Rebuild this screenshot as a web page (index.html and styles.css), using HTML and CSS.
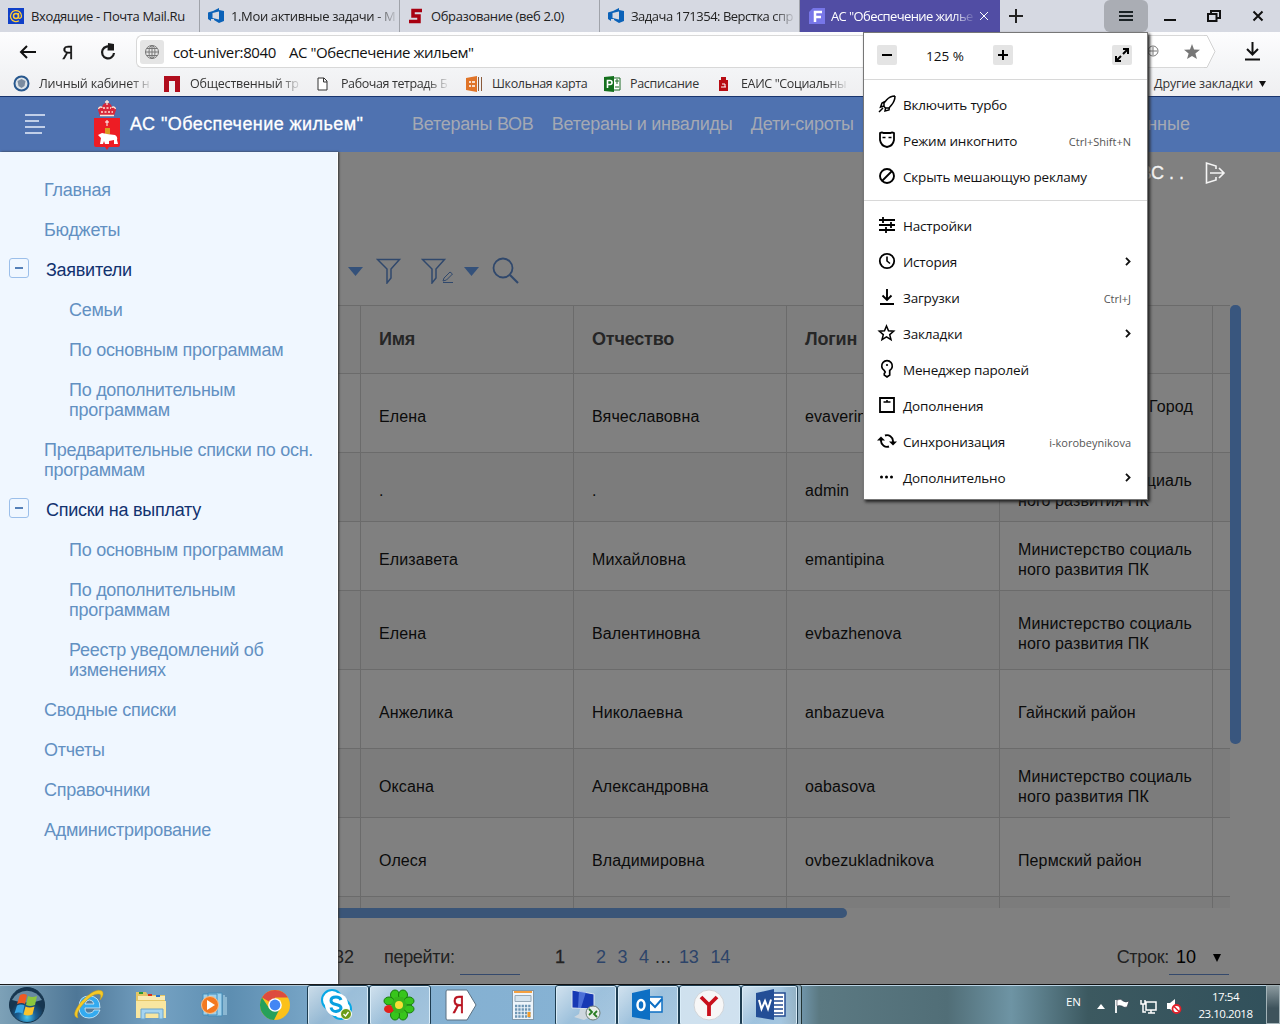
FILE: index.html
```html
<!DOCTYPE html>
<html lang="ru">
<head>
<meta charset="utf-8">
<title>АС "Обеспечение жильем"</title>
<link rel="stylesheet" href="styles.css">
</head>
<body>
<svg class="defs" width="0" height="0">
  <symbol id="vs" viewBox="0 0 16 16"><path fill="#0b62b8" fill-rule="evenodd" d="M0 4.500 5 3l6-3v2l5 1v10l-5 2-5-3v-1L3 11v2l-3-2zM4.500 5v5l6.500 1.500V3.500z"/></symbol>
  <symbol id="chev" viewBox="0 0 6 9"><path d="M1 .8 4.6 4.5 1 8.200" fill="none" stroke="#111" stroke-width="1.800"/></symbol>
  <symbol id="funnel" viewBox="0 0 26 26"><path d="M1.500 1.500h22L15 11v9l-4 5V11z" fill="none" stroke="#30486c" stroke-width="1.500"/></symbol>
</svg>
<div class="screen">
  <div class="tabs">
    <div class="tab"><svg width="16" height="16"><rect width="16" height="16" fill="#1040c8"/><circle cx="8" cy="8" r="2.500" fill="none" stroke="#fc3" stroke-width="1.500"/><path d="M10.500 5v4.500c.5 1.500 3 1 3-1.500a5.500 5.500 0 1 0-2.500 4.700" fill="none" stroke="#fc3" stroke-width="1.300"/></svg><span class="t1">Входящие - Почта Mail.Ru</span></div>
    <div class="tab"><svg width="16" height="16"><use href="#vs"/></svg><span class="t2 fade">1.Мои активные задачи - М</span></div>
    <div class="tab"><svg width="16" height="16"><path d="M14 2.500H5V8h6v5.500H1" fill="none" stroke="#a80010" stroke-width="3.500"/></svg><span class="t3">Образование (веб 2.0)</span></div>
    <div class="tab"><svg width="16" height="16"><use href="#vs"/></svg><span class="t4 fade">Задача 171354: Верстка спр</span></div>
    <div class="tab active"><svg width="16" height="16"><path d="M4 0h12v16H0V4z" fill="#7776e8"/><path d="M6 14V4h7M6 9h6" fill="none" stroke="#fff" stroke-width="2.500"/></svg><span class="t5 fade">АС "Обеспечение жилье</span><svg width="8" height="8"><path d="m0 0 8 8m0-8L0 8" stroke="#fff"/></svg></div>
    <svg class="plus" width="14" height="14"><path d="M7 0v14M0 7h14" stroke="#222" stroke-width="2"/></svg>
    <div class="burger"><svg width="14" height="12"><path d="M0 2h14M0 6h14M0 10h14" stroke="#1b2225" stroke-width="1.800"/></svg></div>
    <div class="winbtns">
      <svg width="12" height="14"><path d="M0 11h12" stroke="#111" stroke-width="2"/></svg>
      <svg width="14" height="14"><path d="M4 4V2h9v7h-3M1 5h8.500v7H1z" fill="none" stroke="#111" stroke-width="2"/></svg>
      <svg width="12" height="12"><path d="m1.500 1.500 9 9m0-9-9 9" stroke="#111" stroke-width="2"/></svg>
    </div>
  </div>
  <div class="addr">
    <svg width="18" height="14"><path d="M17 7H2m6-6L2 7l6 6" fill="none" stroke="#111" stroke-width="2"/></svg>
    <span class="ya">Я</span>
    <svg class="reload" width="16" height="18"><path d="M11.500 4.500A6 6 0 1 0 14 10" fill="none" stroke="#1b1b1b" stroke-width="2.200"/><path d="M8 0l6 1v6.500H7.500z" fill="#1b1b1b"/></svg>
    <div class="field">
      <div class="globe"><svg width="16" height="16" fill="none" stroke="#777"><circle cx="8" cy="8" r="6.500"/><ellipse cx="8" cy="8" rx="3" ry="6.500"/><path d="M1.500 8h13M3 4.500h10M3 11.500h10M8 1v14"/></svg></div>
      <span class="host">cot-univer:8040</span><span class="ttl">АС "Обеспечение жильем"</span>
      <span class="grow"></span>
      <svg width="14" height="14" fill="none" stroke="#777"><circle cx="7" cy="6" r="5"/><path d="M7 2v8M3 6h8"/></svg>
      <svg class="star" width="16" height="16" viewBox="0 0 18 18"><path fill="#777" d="m9 0 2.300 6.200L18 6.500l-5.200 4.200L14.600 17 9 13.400 3.400 17l1.800-6.300L0 6.500l6.700-.3z"/></svg>
    </div>
    <svg class="tip" width="12" height="33"><path d="M0 .5h3l8 16-8 16H0" fill="#fff" stroke="#d2d2d2"/></svg>
    <svg class="dl" width="15" height="19"><path d="M7.500 0v12M2 7l5.500 5.500L13 7M0 17.500h15" fill="none" stroke="#111" stroke-width="2"/></svg>
  </div>
  <div class="marks">
    <span class="bm b1"><svg width="17" height="17"><circle cx="8.500" cy="8.500" r="7" fill="#dde3e8" stroke="#28588e" stroke-width="2"/><path d="M4.500 6 8.500 4l4 2-1 5-3 2-3-2z" fill="#7b8ca0"/></svg><i class="fade">Личный кабинет н</i></span>
    <span class="bm b2"><svg width="16" height="16"><path d="M0 0h16v16h-5V5H5v11H0z" fill="#b00d1d"/></svg><i class="fade">Общественный тр</i></span>
    <span class="bm b3"><svg width="11" height="14"><path d="M1 1h6l3 3v9H1zM6.500 1v4H10" fill="#fff" stroke="#333"/></svg><i class="fade">Рабочая тетрадь Б</i></span>
    <span class="bm b4"><svg width="17" height="16"><path d="m0 2 11-2v16L0 14z" fill="#e07428"/><path d="M3 6h2m1 0h3M3 10h2m1 0h3" stroke="#fff" stroke-width="1.500"/><path d="M12.500 1v14m3-14v14" stroke="#8a5a3a"/></svg><i>Школьная карта</i></span>
    <span class="bm b5"><svg width="17" height="16"><path d="M8 2h8v12H8z" fill="#fff" stroke="#1c6b25"/><path d="m0 1 10-1v16L0 15z" fill="#14701e"/><path d="M3.500 12V4.500H6a2 2 0 0 1 0 4H3.500" fill="none" stroke="#fff" stroke-width="1.600"/><path d="M11 5h4m-2-2v5m-2 3h4" stroke="#1c6b25"/></svg><i>Расписание</i></span>
    <span class="bm b6"><svg width="9" height="14"><path d="M2 0h5v3H2zM0 3h9v11H0z" fill="#b80d14"/><path d="M2 10h5M3 7h3v3" stroke="#fff" fill="none"/></svg><i class="fade">ЕАИС "Социальны</i></span>
    <span class="bm b7"><i>Другие закладки</i><svg width="7" height="6"><path d="M0 0h7L3.500 6z" fill="#111"/></svg></span>
  </div>

  <header class="head">
    <svg class="hm" width="22" height="20"><path d="M1 1h20M1 7h14M1 13h20M1 19h17" stroke="#e7eefa" stroke-width="1.600"/></svg>
    <svg class="arms" width="28" height="50" viewBox="0 0 28 50"><path d="M1 18h26v27q0 2-2 2H16l-2 3-2-3H3q-2 0-2-2z" fill="#ed1c24"/><path d="m7 16-2-6q0-4 4-3 1-4 5-4t5 4q4-1 4 3l-2 6z" fill="#d8273a"/><path d="M7 15.500h14M5.500 9q1-3 4-1.500M22.500 9q-1-3-4-1.500M14 0v5m-2-3h4" fill="none" stroke="#ffe8d8" stroke-width="1.300"/><path d="M8 12h12M10 8h8" stroke="#ffe8d8" stroke-width="1.500" stroke-dasharray="2 1.500"/><path d="M14 20v6m-2-4h4" stroke="#fff"/><path d="M12 28h5v6h-5z" fill="#d99b22"/><path d="m5 35 4-2 5 1 8 1q3 2 2 5l1 4h-4v-4l-5 1v3h-4l-1-3-1 3H7l1-6z" fill="#fff"/></svg>
    <span class="app">АС "Обеспечение жильем"</span>
    <nav><span>Ветераны ВОВ</span><span>Ветераны и инвалиды</span><span>Дети-сироты</span></nav>
    <span class="lastnav">нные</span>
  </header>

  <div class="body">
    <aside>
      <a>Главная</a>
      <a>Бюджеты</a>
      <a class="open"><b></b>Заявители</a>
      <a class="sub">Семьи</a>
      <a class="sub">По основным программам</a>
      <a class="sub">По дополнительным<br>программам</a>
      <a>Предварительные списки по осн.<br>программам</a>
      <a class="open"><b></b>Списки на выплату</a>
      <a class="sub">По основным программам</a>
      <a class="sub">По дополнительным<br>программам</a>
      <a class="sub">Реестр уведомлений об<br>изменениях</a>
      <a>Сводные списки</a>
      <a>Отчеты</a>
      <a>Справочники</a>
      <a>Администрирование</a>
    </aside>
    <main>
      <div class="user"><span>ВС . .</span><svg width="20" height="22"><path d="M11 7V4L1.500 1v20l9.500-3v-3M5 11h14m-5-5 5 5-5 5" fill="none" stroke="#f4f4f4" stroke-width="1.600"/></svg></div>
      <div class="tools">
        <svg class="c1" width="16" height="9"><path d="M0 0h15L7.500 9z" fill="#34517a"/></svg>
        <svg class="c2" width="26" height="26"><use href="#funnel"/></svg>
        <svg class="c3" width="34" height="26"><use href="#funnel" width="26" height="26"/><path d="m23 20 6-6 2.500 2-6 6-3.500 1zm-1 4.500h10" fill="none" stroke="#30486c"/></svg>
        <svg class="c4" width="16" height="9"><path d="M0 0h15L7.500 9z" fill="#34517a"/></svg>
        <svg class="c5" width="28" height="28"><circle cx="11" cy="11" r="9.500" fill="none" stroke="#30486c" stroke-width="1.800"/><path d="m18 18 8 8" stroke="#30486c" stroke-width="2.200"/></svg>
      </div>
      <div class="tablewrap">
        <div class="table">
          <div class="row th"><p></p><p>Имя</p><p>Отчество</p><p>Логин</p><p></p></div>
          <div class="row tall"><p></p><p>Елена</p><p>Вячеславовна</p><p>evaverina</p><p class="city">Город<br>&nbsp;</p></div>
          <div class="row alt"><p></p><p>.</p><p>.</p><p>admin</p><p>Министерство социаль<br>ного развития ПК</p></div>
          <div class="row"><p></p><p>Елизавета</p><p>Михайловна</p><p>emantipina</p><p>Министерство социаль<br>ного развития ПК</p></div>
          <div class="row tall alt"><p></p><p>Елена</p><p>Валентиновна</p><p>evbazhenova</p><p>Министерство социаль<br>ного развития ПК</p></div>
          <div class="row tall"><p></p><p>Анжелика</p><p>Николаевна</p><p>anbazueva</p><p>Гайнский район</p></div>
          <div class="row alt"><p></p><p>Оксана</p><p>Александровна</p><p>oabasova</p><p>Министерство социаль<br>ного развития ПК</p></div>
          <div class="row tall"><p></p><p>Олеся</p><p>Владимировна</p><p>ovbezukladnikova</p><p>Пермский район</p></div>
          <div class="row alt"><p></p><p></p><p></p><p></p><p></p></div>
        </div>
        <div class="vbar"></div>
      </div>
      <div class="hbar"></div>
      <div class="pager">
        <span class="total"><span>132</span></span><span class="go">перейти:</span><span class="inp"></span>
        <span class="cur">1</span><span class="p2">2</span><span class="p3">3</span><span class="p4">4</span><span class="dots">...</span><span class="p13">13</span><span class="p14">14</span>
        <span class="grow"></span><span class="rows">Строк:</span><span class="sel">10<svg width="8" height="8"><path d="M0 0h8L4 8z" fill="#000"/></svg></span>
      </div>
    </main>
  </div>

  <div class="taskbar">
    <div class="start"><svg width="38" height="38" viewBox="0 0 38 38"><defs><radialGradient id="orb" cx=".5" cy=".85"><stop offset="0" stop-color="#48c8f0"/><stop offset=".5" stop-color="#1c5f94"/><stop offset="1" stop-color="#173650"/></radialGradient></defs><circle cx="19" cy="19" r="17.500" fill="url(#orb)" stroke="#16344c"/><path d="M4 14a16 14 0 0 1 30 0q-15 5-30 0" fill="#9cc3d8" opacity=".6"/><path d="M12 9q4-2 7 0l-2 9q-3-2-8 0z" fill="#ee5a24"/><path d="M20 10q4 2 9 0l-2 9q-5 2-9 0z" fill="#8cc63e"/><path d="M9 19.500q4-2 7.500 0l-2 8q-4-2-8 0z" fill="#38a4e4"/><path d="M17.500 20.500q4 2 9 0l-2 8q-5 2-9 0z" fill="#fcc42c"/></svg></div>
    <div class="task"><svg width="32" height="32"><path d="M27 21q-3 8-11 8-10 0-10-11T16 7q11 0 11 12H12q0 6 5 5 3 0 4-3zM12 15h9q-1-4-4.500-4T12 15" fill="#33aaf0" stroke="#d8f0fb" stroke-width=".8"/><path d="M5 29Q-3 27 8 13 22-2 29 2q3 3-2 9 2-6-1-6-6-1-15 9T5 29" fill="#f5ca28" stroke="#cf9e13" stroke-width=".5"/></svg></div>
    <div class="task"><svg width="32" height="30"><path d="M1 5V2h10l2 3h17v22H1z" fill="#e4c565"/><path d="M3 7h27M3 9h27" stroke="#fff8d0" stroke-width="1.500"/><path d="M1 11h30v17H1z" fill="#f8e6a0"/><path d="M4 3h4" stroke="#2a9a30" stroke-width="2"/><path d="M13 5h4" stroke="#d63020" stroke-width="2"/><path d="M21 6h4" stroke="#2a75cc" stroke-width="2"/><path d="M6 29V19h22v10h-4v-6H10v6z" fill="#a5d4f0" stroke="#6ba5cd"/></svg></div>
    <div class="task"><svg width="28" height="26"><path d="M9 1h14v23H9zM4 2h14v21H4z" fill="#9ed1ec" stroke="#468db8"/><path d="M25 3v20M27 5v18" stroke="#b7dff1"/><circle cx="11" cy="13" r="8.500" fill="#f47920" stroke="#fac08c"/><path d="m8 8 8 5-8 5z" fill="#fff"/></svg></div>
    <div class="task"><svg width="30" height="30"><circle cx="15" cy="15" r="15" fill="#fbc11a"/><path d="M15 15 2 7.500A15 15 0 0 1 28 7.500H15z" fill="#dd4b3e"/><path d="M2 7.500A15 15 0 0 0 14 30l6-12-5 3-6-3z" fill="#26a05a"/><circle cx="15" cy="15" r="6.800" fill="#fff"/><circle cx="15" cy="15" r="5.400" fill="#4486f4"/></svg></div>
    <div class="task on"><svg width="32" height="32"><circle cx="11" cy="11" r="10" fill="#fff" stroke="#08a8e6" stroke-width="2"/><circle cx="20" cy="20" r="10" fill="#fff" stroke="#08a8e6" stroke-width="2"/><circle cx="15.500" cy="15.500" r="11.500" fill="#fff"/><path d="M20 11q-1-3-5-3-5 0-5 3.500 0 3 5 4t5 3.500-5 3.500q-4 0-5-4" fill="none" stroke="#08a0e0" stroke-width="3"/><circle cx="25" cy="25" r="5.500" fill="#6c9c18" stroke="#fff"/><path d="m22.500 25 2 2 3-4" fill="none" stroke="#fff" stroke-width="1.300"/></svg></div>
    <div class="task on"><svg width="32" height="32"><g fill="#37c51c" stroke="#187c0c"><ellipse cx="12" cy="6" rx="4.500" ry="5"/><ellipse cx="20" cy="6" rx="4.500" ry="5"/><ellipse cx="26" cy="12" rx="5" ry="4"/><ellipse cx="26" cy="20" rx="5" ry="4"/><ellipse cx="20" cy="26" rx="4.500" ry="5"/><ellipse cx="12" cy="26" rx="4.500" ry="5"/><ellipse cx="6" cy="12" rx="5" ry="4"/></g><ellipse cx="6" cy="20" rx="5" ry="4" fill="#e2211c"/><path d="M12 8h8l4 8-4 8h-8l-4-8z" fill="#37b51c"/><circle cx="16" cy="16" r="4" fill="#f8df36"/></svg></div>
    <div class="task"><svg width="32" height="32"><path d="M2 1h20l9 15-9 15H2q-1 0-1-2V3q0-2 1-2" fill="#fff" stroke="#5b7182"/></svg><span class="yared">Я</span></div>
    <div class="task"><svg width="22" height="30"><rect x=".5" y=".5" width="21" height="29" fill="#eef5fb" stroke="#8199ab"/><path d="M2 2h18" stroke="#f4a040" stroke-width="2"/><path d="M3 5.500h16v6H3z" fill="#d4e3ee" stroke="#96a9b8"/><path d="M3 16h16M3 19.500h16M3 23h16M3 26.500h16" stroke="#6e96b5" stroke-width="2.300" stroke-dasharray="2.300 1"/><path d="M17 22v5" stroke="#f39b28" stroke-width="3"/></svg></div>
    <div class="task on"><svg width="32" height="32"><path d="m3 1 22 4v15L3 19z" fill="#1739b4" stroke="#dde7ef"/><path d="m10 2 7 1-5 16H9z" fill="#6f95ef" opacity=".6"/><path d="m11 20-1 5-5 3 10 3 6-3-4-3v-5" fill="#ced7de"/><circle cx="24" cy="24" r="7" fill="#e7ece7" stroke="#6f7c78"/><path d="m20 20 3 3-3 3m8-4-3 3 3 3" fill="none" stroke="#297c22" stroke-width="1.800"/></svg></div>
    <div class="task on"><svg width="32" height="32"><path d="M17 8h14v15H17z" fill="#fff" stroke="#0d6fc4" stroke-width="1.500"/><path d="m18 12 6 6 7-8" fill="none" stroke="#0d6fc4" stroke-width="2"/><path d="m1 4 18-4v31L1 28z" fill="#0d6fc4"/><ellipse cx="10" cy="16" rx="3.500" ry="5" fill="none" stroke="#fff" stroke-width="2.500"/></svg></div>
    <div class="task on hot"><svg width="32" height="32"><circle cx="16" cy="16" r="15" fill="#f7f7f7" stroke="#d0d4d8"/><path d="m8 8 8 8v11m0-11 8-8" fill="none" stroke="#c8101c" stroke-width="3.800"/></svg></div>
    <div class="task on stack"><svg width="32" height="32"><path d="M17 4h13v23H17z" fill="#fff" stroke="#244c92" stroke-width="1.500"/><path d="M19 8h9M19 12h9M19 16h9M19 20h9M19 24h9" stroke="#244c92" stroke-width="1.500"/><path d="m1 4 18-4v31L1 28z" fill="#234e96"/><path d="m4 11 2.500 9L10 12l3 8 3-9.500" fill="none" stroke="#fff" stroke-width="2"/></svg></div>
    <span class="grow"></span>
    <span class="en">EN</span>
    <div class="tray">
      <svg width="8" height="5"><path d="m4 0 4 5H0z" fill="#fff"/></svg>
      <svg width="16" height="16"><path d="M2 2v13" stroke="#fff" stroke-width="1.800"/><path d="M3 2q4-2 6 1 3 2 6 0l-2 6q-3 1-5-1-3-1-5 0z" fill="#fff" stroke="#223" stroke-width=".5"/></svg>
      <svg width="17" height="16"><path d="M6 4h10v8H6zM8 15h7m-4-3v3M1 2v4h4V2M3 6v8h3" fill="none" stroke="#fff" stroke-width="1.500"/></svg>
      <svg width="16" height="16"><path d="M1 5h3l5-4v14l-5-4H1z" fill="#fff"/><circle cx="10.500" cy="11" r="4" fill="#fff" stroke="#e2202a" stroke-width="1.800"/><path d="m8 8.500 5 5" stroke="#e2202a" stroke-width="1.500"/></svg>
    </div>
    <div class="clock">17:54<br>23.10.2018</div>
    <div class="peek"></div>
  </div>

  <div class="menu">
    <div class="zoomrow"><span class="zb"><svg width="12" height="12"><path d="M1 6h10" stroke="#000" stroke-width="2"/></svg></span><span class="pct">125 %</span><span class="zb"><svg width="12" height="12"><path d="M1 6h10M6 1v10" stroke="#000" stroke-width="2"/></svg></span><span class="grow"></span><span class="zb"><svg width="16" height="16"><path d="M9 2h5v5M14 2 9 7M2 9v5h5M2 14l5-5" fill="none" stroke="#000" stroke-width="2"/></svg></span></div>
    <div class="group">
      <div class="mi"><svg width="18" height="18"><path d="M17 1q-5 0-8.500 4L6 8v3.500l1.500 1.500H11l2.500-3Q17 6 17 1M7 6.500 4 8l-1.500 4L6 11m5.500 1L11 15l-4 1 .5-3M5 13l-4 4" fill="none" stroke="#000" stroke-width="1.500"/></svg><span>Включить турбо</span></div>
      <div class="mi"><svg width="18" height="18"><path d="M2 2q2-1 3.500 0h7Q14 1 16 2v7q-1 6-7 7-6-1-7-7z" fill="none" stroke="#000" stroke-width="1.800"/><path d="M4.500 6.500h3m3 0h3" stroke="#000" stroke-width="1.300"/></svg><span>Режим инкогнито</span><em>Ctrl+Shift+N</em></div>
      <div class="mi"><svg width="18" height="18"><path d="m4 14 10-10" stroke="#000" stroke-width="1.800"/><circle cx="9" cy="9" r="7" fill="none" stroke="#000" stroke-width="1.900"/></svg><span>Скрыть мешающую рекламу</span></div>
    </div>
    <div class="group second">
      <div class="mi"><svg width="18" height="18"><path d="M1 4h16M1 9h16M1 14h16M5 1v6m8-1v6M8 11v6" stroke="#000" stroke-width="1.800"/></svg><span>Настройки</span></div>
      <div class="mi"><svg width="18" height="18"><path d="M9 4.500V9l3 2.500" fill="none" stroke="#000" stroke-width="1.600"/><circle cx="9" cy="9" r="7.200" fill="none" stroke="#000" stroke-width="1.800"/></svg><span>История</span><svg class="chev"><use href="#chev"/></svg></div>
      <div class="mi"><svg width="18" height="18"><path d="M9 1v11M4.500 7.500 9 12l4.500-4.500M2 16h14" fill="none" stroke="#000" stroke-width="1.900"/></svg><span>Загрузки</span><em>Ctrl+J</em></div>
      <div class="mi"><svg width="18" height="18"><path d="m8.500 2 2 4.800 5.200.4-4 3.400 1.300 5.100-4.500-2.800L4 15.700l1.300-5.100-4-3.400 5.200-.4z" fill="none" stroke="#000" stroke-width="1.500"/></svg><span>Закладки</span><svg class="chev"><use href="#chev"/></svg></div>
      <div class="mi"><svg width="18" height="18"><path d="M6.300 10.500A5.300 5.300 0 1 1 11.700 10.500V15L9 17l-2.700-2v-1.500l.9-1.500z" fill="none" stroke="#000" stroke-width="1.700"/><circle cx="9" cy="5" r="1.100"/></svg><span>Менеджер паролей</span></div>
      <div class="mi"><svg width="18" height="18"><path d="M2 2h14v14H2z" fill="none" stroke="#000" stroke-width="1.800"/><path d="M5.500 6h7M9 4v2" stroke="#000" stroke-width="1.600"/></svg><span>Дополнения</span></div>
      <div class="mi"><svg width="18" height="18"><path d="M3 7v2a6 6 0 0 0 8 5.500M15 11V9A6 6 0 0 0 7 3.500" fill="none" stroke="#000" stroke-width="1.900"/><path d="m-1 8.500 4-4 4 4zm12 1 4 4 4-4z"/></svg><span>Синхронизация</span><em>i-korobeynikova</em></div>
      <div class="mi"><svg width="18" height="18"><circle cx="3.500" cy="9" r="1.500"/><circle cx="8.500" cy="9" r="1.500"/><circle cx="13.500" cy="9" r="1.500"/></svg><span>Дополнительно</span><svg class="chev"><use href="#chev"/></svg></div>
    </div>
  </div>
</div>
</body>
</html>
```
FILE: styles.css
```css
* { box-sizing: border-box; }
body { margin: 0; font-family: "Liberation Sans", Arial, sans-serif; }
svg { display: block; flex: none; overflow: visible; }
p { margin: 0; }
.defs { position: absolute; }
.grow { flex: 1; }
.screen { position: relative; width: 1280px; height: 1024px; overflow: hidden; display: flex; flex-direction: column; }
.tabs, .addr, .marks, .menu, .taskbar { font-family: "Open Sans", "Noto Sans", sans-serif; white-space: nowrap; }
.fade { -webkit-mask-image: linear-gradient(to right, #000 calc(100% - 20px), #0002); mask-image: linear-gradient(to right, #000 calc(100% - 20px), #0002); }

.tabs { height: 32px; flex: none; display: flex; background: #d6d9e2; align-items: center; }
.tab { width: 200px; height: 32px; padding-left: 8px; display: flex; align-items: center; gap: 7px; border-right: 1px solid #a0a3aa; font-size: 13px; letter-spacing: -.37px; color: #222; }
.tab span { flex: none; }
.tab.active { background: #514da4; color: #fff; border: 0; padding-left: 9px; gap: 6px; }
.tab.active > svg:last-child { margin-left: auto; margin-right: 12px; }
.t5 { letter-spacing: -.6px; }
.t4 { letter-spacing: -.5px; }
.plus { margin-left: 9px; }
.burger { margin-left: 81px; width: 44px; height: 32px; border-radius: 6px; background: #aaadb4; display: grid; place-items: center; }
.winbtns { flex: 1; display: flex; justify-content: space-between; align-items: center; padding: 0 16px 0 16px; }

.addr { height: 39px; flex: none; display: flex; align-items: center; background: linear-gradient(#fdfdfe, #f3f4f6); padding-left: 19px; }
.ya { width: 12px; margin-left: 25px; font-size: 19px; color: #111; -webkit-text-stroke: .4px #111; transform: scaleX(.95); }
.reload { margin-left: 26px; }
.field { margin-left: 20px; width: 1068px; height: 33px; background: #fff; border: 1px solid #d8d8d8; border-right: 0; border-radius: 6px 0 0 6px; display: flex; align-items: center; padding-left: 3px; font-size: 15px; color: #111; }
.globe { width: 24px; height: 24px; border-radius: 3px; background: #e5e5e5; display: grid; place-items: center; margin-right: 9px; }
.host { width: 116px; letter-spacing: -.4px; }
.ttl { letter-spacing: -.45px; }
.star { margin: 0 4px 0 24px; }
.dl { margin-left: 29px; }

.marks { height: 25px; flex: none; display: flex; align-items: center; background: linear-gradient(#f3f4f6, #efeff1); padding-left: 13px; font-size: 12.5px; letter-spacing: -.3px; color: #333; }
.bm { display: flex; align-items: center; flex: none; gap: 10px; }
.bm i { font-style: normal; flex: none; }
.b1 { width: 151px; gap: 9px; }
.b1 i, .b2 i, .b3 i { letter-spacing: -.2px; }
.b2 { width: 153px; }
.b3 { width: 149px; gap: 13px; }
.b3 i { letter-spacing: -.4px; }
.b4 { width: 138px; gap: 9px; }
.b4 i { letter-spacing: -.35px; }
.b5 { width: 115px; gap: 9px; }
.b6 { width: 434px; gap: 13px; }
.b6 i { letter-spacing: -.35px; }
.b7 { gap: 6px; margin-left: 1px; letter-spacing: -.15px; }

.head { height: 56px; flex: none; background: #4f72b0; border-top: 1px solid #18346e; display: flex; align-items: center; padding-left: 24px; color: #fff; }
.hm { margin-top: -2px; }
.arms { margin-left: 47px; }
.app { margin-left: 9px; width: 282px; font-size: 18px; letter-spacing: .43px; -webkit-text-stroke: .3px #fff; white-space: nowrap; }
.head nav { display: flex; gap: 18.300px; font-size: 18px; letter-spacing: -.27px; color: #a5a9b3; white-space: nowrap; }
.lastnav { margin-left: auto; margin-right: 90px; font-size: 18px; color: #a5a9b3; }

.body { height: 832px; flex: none; display: flex; }
aside { width: 338px; background: #f0f7ff; border-right: 1px solid #fff; padding-top: 18px; display: flex; flex-direction: column; z-index: 1; box-shadow: 1px 0 2px #333; }
aside a { padding: 10px 0 10px 44px; font-size: 18px; line-height: 20px; letter-spacing: -.27px; color: #6290c2; white-space: nowrap; }
aside .sub { padding-left: 69px; }
aside .open { padding-left: 9px; color: #12326f; display: flex; gap: 17px; }
aside b { width: 20px; height: 20px; margin-top: -2px; border: 1px solid #9cbfea; border-radius: 3px; display: grid; place-items: center; }
aside b::before { content: ""; width: 8px; height: 2px; background: #5580b8; }

main { width: 942px; background: #808080; display: flex; flex-direction: column; }
.user { height: 42px; display: flex; justify-content: flex-end; align-items: center; gap: 21px; padding-right: 55px; color: #f4f4f4; font-size: 18px; -webkit-text-stroke: .3px #f4f4f4; }
.tools { height: 111px; display: flex; align-items: flex-start; padding: 62px 0 0 10px; }
.c1 { margin-top: 11px; }
.c2 { margin: 2px 0 0 12px; }
.c3 { margin: 2px 0 0 19px; }
.c4 { margin: 11px 0 0 9px; }
.c5 { margin: 1px 0 0 12px; }
.tablewrap { height: 603px; display: flex; }
.table { width: 892px; overflow: hidden; border-top: 1px solid #6b6b6b; }
.row { height: 69px; display: grid; grid-template-columns: 23px 213px 213px 213px 213px; border-bottom: 1px solid #6b6b6b; font-size: 16px; line-height: 20px; letter-spacing: .11px; color: #0b0b0b; }
.row p { border-right: 1px solid #6b6b6b; padding: 7px 0 0 18px; display: flex; align-items: center; white-space: nowrap; }
.row.alt { background: #7c7c7c; }
.row.tall { height: 79px; }
.row.th { height: 68px; font-weight: bold; font-size: 18px; letter-spacing: -.2px; color: #262626; background: #7e7e7e; }
.row.th p { padding-top: 0; padding-bottom: 2px; }
.row .city { padding-left: 149px; }
.vbar { width: 11px; height: 439px; border-radius: 5px; background: #39567e; }
.hbar { height: 10px; width: 509px; border-radius: 0 5px 5px 0; background: #3a5578; }
.pager { height: 66px; display: flex; align-items: center; padding: 12px 51px 0 0; font-size: 18px; color: #222; }
.total { width: 16px; display: flex; justify-content: flex-end; }
.go { margin-left: 30px; width: 76px; letter-spacing: -.3px; }
.inp { width: 60px; height: 35px; border-bottom: 1px solid #34496c; }
.cur { margin-left: 35px; width: 41px; -webkit-text-stroke: .3px #222; }
.p2, .p3, .p4, .p13, .p14 { color: #2d4469; letter-spacing: -.2px; }
.p2, .p3 { width: 21.500px; } .p4 { width: 16px; } .dots { width: 24px; letter-spacing: .5px; } .p13 { width: 31.500px; }
.rows { letter-spacing: -.3px; }
.sel { width: 60px; height: 35px; padding-left: 7px; padding-top: 2px; border-bottom: 1px solid #34496c; display: flex; align-items: center; gap: 17px; color: #000; }

.taskbar { height: 40px; flex: none; display: flex; align-items: center; border-top: 1px solid #111; box-shadow: inset 0 1px #b8d2e3; background: linear-gradient(to right, #7da1b7 0, #4e7797 6%, #75a2c3 12%, #5d8eb1 18%, #83afd0 27%, #89b5d7 61%, #5b7982 64%, #516e77 74%, #6e94a4 79%, #3c5960 85%, #31505b 100%); color: #fff; }
.start { width: 58px; padding-left: 8px; }
.task { width: 62px; height: 39px; display: grid; place-items: center; position: relative; }
.task.on::before { content: ""; position: absolute; left: 1px; top: 0; width: 60px; height: 39px; border: 1px solid #1d3c50; border-radius: 3px; box-shadow: inset 0 0 0 1px #d9ecf8; background: linear-gradient(135deg, #ffffffa0, #ffffff30 50%, #ffffff44); }
.task.hot::before { background: #ffffff99; }
.task.stack::before { width: 55px; box-shadow: inset 0 0 0 1px #d9ecf8, 3px 0 0 #8eabbc, 4px 0 0 #233; }
.task svg { position: relative; }
.yared { position: absolute; left: 21px; top: 0; font-size: 24px; line-height: 38px; color: #b7101d; -webkit-text-stroke: .6px #b7101d; transform: scaleX(.8); }
.en { font-size: 11.500px; margin-right: 16px; margin-bottom: 6px; }
.tray { display: flex; align-items: center; width: 85px; margin-top: 3px; justify-content: space-between; }
.clock { width: 84px; padding-left: 3px; font-size: 11.500px; line-height: 17px; text-align: center; letter-spacing: -.45px; }
.peek { width: 14px; height: 39px; border: 1px solid #a3b3b8; background: linear-gradient(#8b9a9f, #3e535c 60%); }

.menu { position: absolute; left: 863px; top: 32px; width: 285px; height: 468px; background: #fff; border: 1px solid #777; box-shadow: 2px 2px 3px #222; font-size: 13.500px; letter-spacing: -.2px; color: #111; }
.zoomrow { height: 47px; border-bottom: 1px solid #d8d8d8; padding: 0 15px 2px 13px; display: flex; align-items: center; }
.zb { width: 20px; height: 20px; border-radius: 2px; background: #e4e4e4; display: grid; place-items: center; }
.pct { width: 96px; text-align: center; letter-spacing: 0; padding-top: 2px; }
.group { padding-top: 7px; height: 121px; border-bottom: 1px solid #d8d8d8; }
.group.second { border: 0; height: auto; }
.mi { height: 36px; display: flex; align-items: center; padding: 0 16px 0 14px; }
.mi > svg:first-child { margin: -2px 7px 0 0; }
.mi em { margin-left: auto; font-style: normal; font-size: 11px; letter-spacing: 0; color: #555; padding-top: 1px; }
.mi .chev { width: 6px; height: 9px; margin-left: auto; margin-top: -2px; }
```
